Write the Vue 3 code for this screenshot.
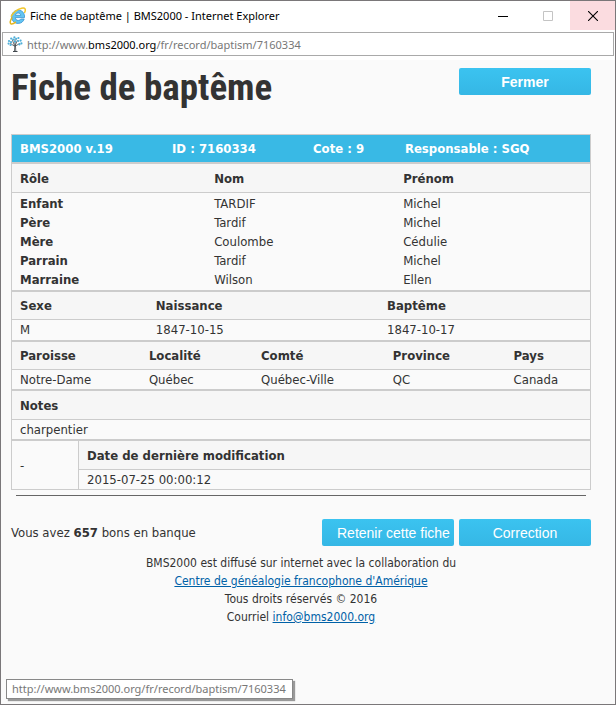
<template>
  <div class="window">
    <header class="titlebar">
      <svg class="ie-icon" width="18" height="18" viewBox="0 0 18 18">
        <path d="M15.2 12H11.7C11.1 13 10.3 13.4 9.2 13.4 7.5 13.4 6.5 12.4 6.4 10.6H15.5C15.9 6.2 13.3 3.2 9.4 3.2 5.4 3.2 2.6 6 2.6 9.9 2.6 13.7 5.4 16.4 9.2 16.4 12.1 16.4 14.3 14.8 15.2 12ZM6.5 8.3C6.8 6.8 7.7 6 9.2 6 10.7 6 11.6 6.9 11.7 8.3Z" fill="#62c4f2" stroke="#3590cf" stroke-width=".8" fill-rule="evenodd" />
        <path d="M3.2 10.4C1.2 13.4 .6 16 1.9 16.8 2.9 17.4 4.9 16.5 6.9 14.9" fill="none" stroke="#e5b51c" stroke-width="1.5" />
        <path d="M2 9.6C4.2 5.7 8.8 2.1 12.6 1.2 16.2 .4 17.3 2.2 15.4 6" fill="none" stroke="#f1c62d" stroke-width="1.5" />
      </svg>
      <span class="title">Fiche de baptême | BMS2000 - Internet Explorer</span>
      <button class="win-btn" aria-label="Réduire">
        <svg width="10" height="10" viewBox="0 0 10 10"><path d="M0 5.5H10" stroke="#000" /></svg>
      </button>
      <button class="win-btn" aria-label="Agrandir" disabled>
        <svg width="10" height="10" viewBox="0 0 10 10"><path d="M.5 .5H9.5V9.5H.5Z" fill="none" stroke="#c4c4c4" /></svg>
      </button>
      <button class="win-btn close" aria-label="Fermer la fenêtre">
        <svg width="10" height="10" viewBox="0 0 10 10"><path d="M0 0L10 10M10 0L0 10" stroke="#000" stroke-width="1.1" /></svg>
      </button>
    </header>

    <div class="address">
      <svg width="16" height="16" viewBox="0 0 16 16">
        <path d="M7.4 15.5L7.8 10.5 3.2 7.2M7.8 10.5L5.4 4M8 10L10.4 4.2M8.2 10.2L12.8 7.4M8 9V3M8.4 8.8L8.8 15.5" fill="none" stroke="#41474d" stroke-width=".8" />
        <path d="M6 15.5H10.5" stroke="#41474d" />
        <g fill="#4daed8">
          <circle v-for="(leaf, i) in leaves" :key="i" :cx="leaf[0]" :cy="leaf[1]" r="1.1" />
        </g>
      </svg>
      <span class="url">http://www.<b>bms2000.org</b>/fr/record/baptism/7160334</span>
    </div>

    <main class="page">
      <div class="top">
        <h1>Fiche de baptême</h1>
        <button class="btn bold">Fermer</button>
      </div>

      <table class="banner">
        <thead>
          <tr>
            <th v-for="c in banner" :key="c.text" :style="{ width: c.width }">{{ c.text }}</th>
          </tr>
        </thead>
      </table>

      <table v-for="t in tables" :key="t.name" :class="t.name">
        <thead>
          <tr>
            <th v-for="c in t.cols" :key="c.text" :style="{ width: c.width }">{{ c.text }}</th>
          </tr>
        </thead>
        <tbody>
          <tr v-for="(row, i) in t.rows" :key="i">
            <td v-for="(cell, j) in row" :key="j">{{ cell }}</td>
          </tr>
        </tbody>
      </table>

      <table class="modif">
        <tbody>
          <tr>
            <td class="dash" rowspan="2">-</td>
            <th>Date de dernière modification</th>
          </tr>
          <tr>
            <td>2015-07-25 00:00:12</td>
          </tr>
        </tbody>
      </table>

      <hr>

      <div class="actions">
        <p>Vous avez <strong>657</strong> bons en banque</p>
        <button class="btn">Retenir cette fiche</button>
        <button class="btn">Correction</button>
      </div>

      <footer>
        <p>BMS2000 est diffusé sur internet avec la collaboration du</p>
        <p><a href="#">Centre de généalogie francophone d'Amérique</a></p>
        <p>Tous droits réservés © 2016</p>
        <p>Courriel <a href="mailto:info@bms2000.org">info@bms2000.org</a></p>
      </footer>
    </main>

    <div class="status">http://www.bms2000.org/fr/record/baptism/7160334</div>
  </div>
</template>

<script setup>
// feuilles de l'arbre du favicon
const leaves = [
  [2, 5], [1.6, 7.6], [4, 6.2], [4.2, 2.6], [6.2, 3.6], [7.4, 1.4],
  [9.2, 2.8], [11.4, 2], [11.2, 5], [13.6, 4.6], [14.4, 7.4], [12.4, 8.4], [8, 5.6], [3.6, 9]
]

const banner = [
  { text: 'BMS2000 v.19', width: '26.3%' },
  { text: 'ID : 7160334', width: '24.4%' },
  { text: 'Cote : 9', width: '15.9%' },
  { text: 'Responsable : SGQ', width: 'auto' }
]

const tables = [
  {
    name: 'people',
    cols: [
      { text: 'Rôle', width: '33.6%' },
      { text: 'Nom', width: '32.7%' },
      { text: 'Prénom', width: 'auto' }
    ],
    rows: [
      ['Enfant', 'TARDIF', 'Michel'],
      ['Père', 'Tardif', 'Michel'],
      ['Mère', 'Coulombe', 'Cédulie'],
      ['Parrain', 'Tardif', 'Michel'],
      ['Marraine', 'Wilson', 'Ellen']
    ]
  },
  {
    name: 'dates',
    cols: [
      { text: 'Sexe', width: '23.5%' },
      { text: 'Naissance', width: '40%' },
      { text: 'Baptême', width: 'auto' }
    ],
    rows: [['M', '1847-10-15', '1847-10-17']]
  },
  {
    name: 'place',
    cols: [
      { text: 'Paroisse', width: '22.3%' },
      { text: 'Localité', width: '19.4%' },
      { text: 'Comté', width: '22.8%' },
      { text: 'Province', width: '20.9%' },
      { text: 'Pays', width: 'auto' }
    ],
    rows: [['Notre-Dame', 'Québec', 'Québec-Ville', 'QC', 'Canada']]
  },
  {
    name: 'notes',
    cols: [{ text: 'Notes', width: 'auto' }],
    rows: [['charpentier']]
  }
]
</script>

<style>
body {
  margin: 0;
}
</style>

<style scoped>
* {
  box-sizing: border-box;
}
.window {
  position: relative;
  display: flex;
  flex-direction: column;
  min-height: 100vh;
  border: 1px solid #7a7779;
  background: #fff;
  color: #333;
  font-family: "DejaVu Sans Condensed", "DejaVu Sans", sans-serif;
  font-size: 13px;
}
.titlebar {
  display: flex;
  align-items: center;
  height: 29px;
  padding-left: 8px;
  color: #000;
  font-family: "Noto Sans", sans-serif;
  font-size: 11px;
}
.title {
  flex: 1;
  margin-left: 3px;
  white-space: nowrap;
}
.win-btn {
  display: flex;
  align-items: center;
  justify-content: center;
  width: 45px;
  height: 29px;
  padding: 0;
  border: none;
  background: none;
}
.win-btn.close {
  background: #fbdce0;
}
.address {
  display: flex;
  align-items: center;
  gap: 4px;
  height: 24px;
  margin: 2px 1px 4px;
  padding-left: 4px;
  border: 1px solid #a9a9a9;
  color: #777;
  font-family: "Noto Sans", sans-serif;
  font-size: 11px;
}
.url b {
  color: #000;
  font-weight: normal;
}
.page {
  flex: 1;
  padding: 8px 24px 16px 10px;
  background: #fafafa;
}
.top {
  display: flex;
  align-items: flex-start;
  justify-content: space-between;
  height: 66px;
}
h1 {
  margin: 0;
  font-family: "Roboto Condensed", "Liberation Sans Narrow", sans-serif;
  font-size: 37px;
  line-height: 40px;
  font-weight: bold;
}
.btn {
  width: 132px;
  height: 27px;
  padding: 0 15px;
  border: none;
  border-radius: 2px;
  background: linear-gradient(#3bc3f0, #35b7e5);
  color: #fff;
  font-family: "Liberation Sans", sans-serif;
  font-size: 14px;
  white-space: nowrap;
}
.btn.bold {
  font-weight: bold;
}
table {
  width: 100%;
  table-layout: fixed;
  border: 1px solid #ccc;
  border-spacing: 0;
}
th,
td {
  padding: 0 8px;
  line-height: 19px;
  text-align: left;
  white-space: nowrap;
}
th {
  height: 29px;
  border-bottom: 1px solid #ccc;
  background: #f6f6f6;
}
.banner th {
  height: 27px;
  border: none;
  background: #39b9e5;
  color: #fff;
}
.people td:first-child {
  font-weight: bold;
}
.people tr:first-child td {
  padding-top: 1px;
}
.people tr:last-child td {
  padding-bottom: 1px;
}
.dates th,
.place th {
  height: 28px;
}
.dates td {
  line-height: 20px;
}
.modif .dash {
  width: 67px;
  border-right: 1px solid #ccc;
}
hr {
  margin: 5px 5px 0;
  border: none;
  border-top: 1px solid #666;
}
.actions {
  display: flex;
  align-items: center;
  gap: 5px;
  margin-top: 23px;
}
.actions p {
  flex: 1;
}
p {
  margin: 0;
}
footer {
  margin-top: 8px;
  font-size: 12px;
  line-height: 18px;
  text-align: center;
}
a {
  color: #0061a7;
}
.status {
  position: absolute;
  left: 5px;
  bottom: 5px;
  height: 20px;
  padding: 0 6px 0 5px;
  border: 1px solid #888;
  background: #fff;
  box-shadow: 2px 2px 1px #999;
  color: #777;
  font-family: "Noto Sans", sans-serif;
  font-size: 11px;
  line-height: 18px;
}
</style>
